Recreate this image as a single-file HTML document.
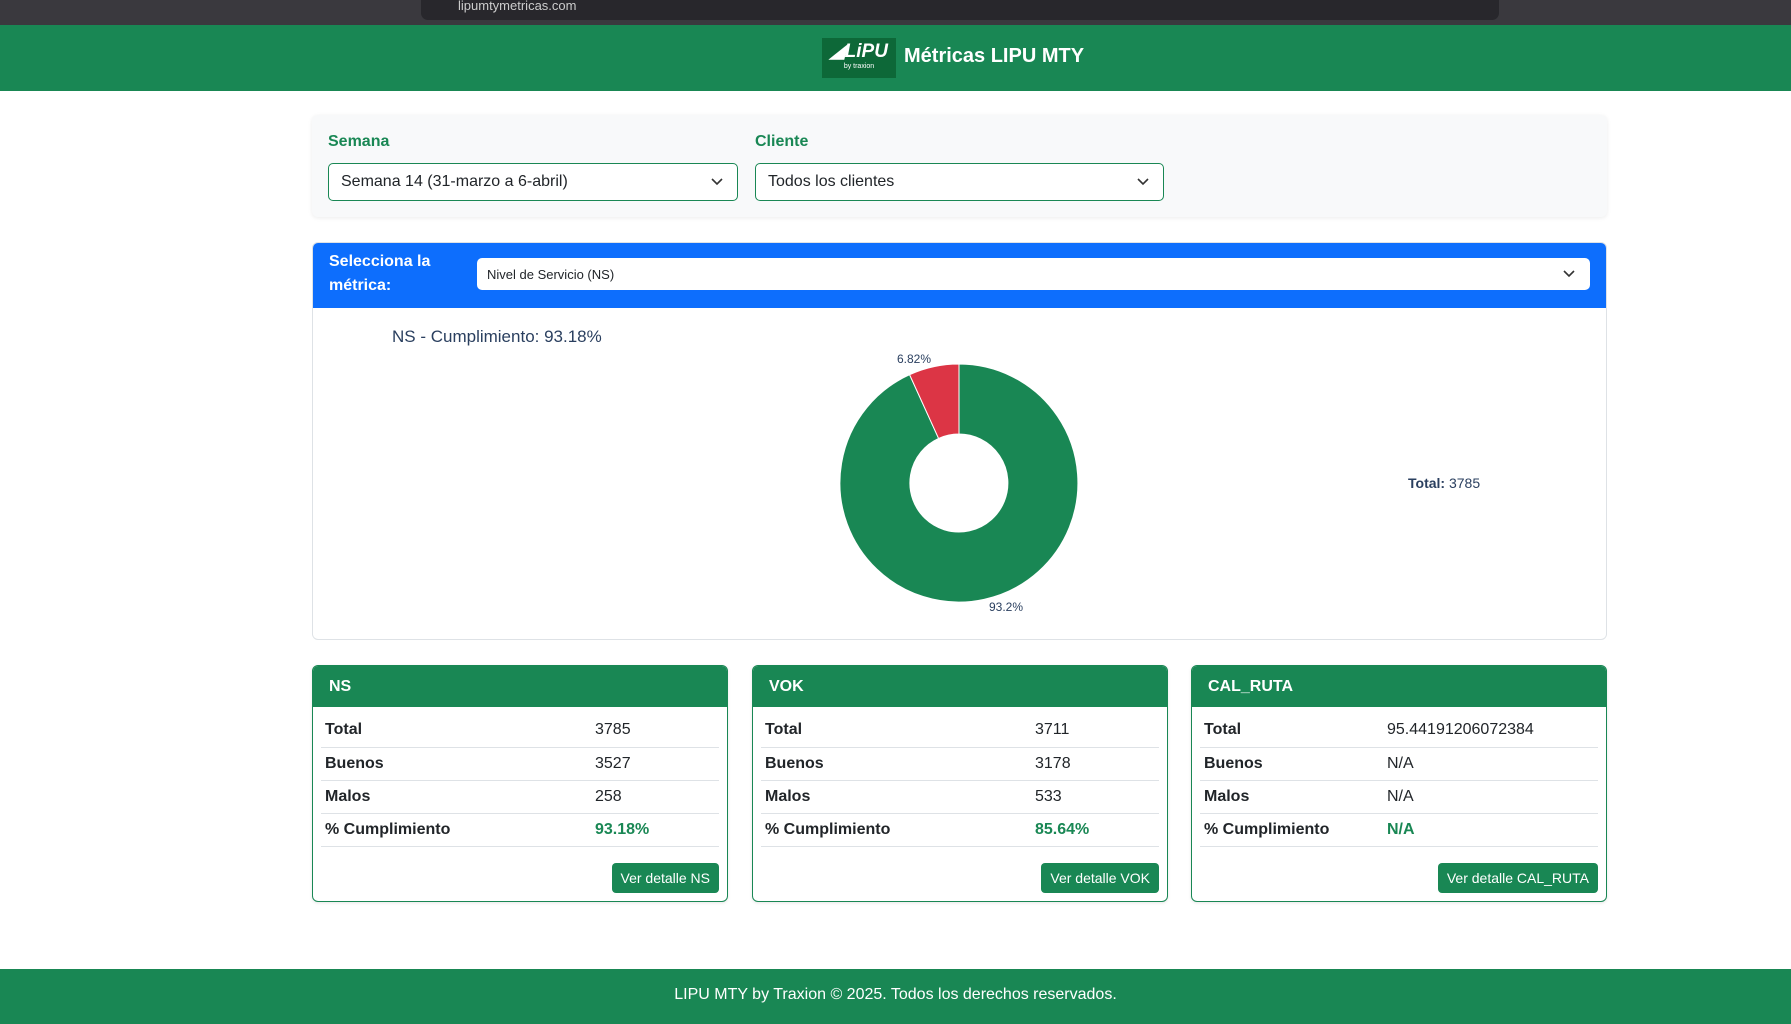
<!DOCTYPE html>
<html><head><meta charset="utf-8"><style>
*{box-sizing:border-box;margin:0;padding:0}
body{width:1791px;height:1024px;overflow:hidden;background:#fff;font-family:"Liberation Sans",sans-serif;color:#212529;position:relative}
.abs{position:absolute}
.sel{position:absolute;background:#fff;border:1px solid #198754;border-radius:5px;font-size:16px;padding-left:12px;display:flex;align-items:center}
.chev{position:absolute;right:14px;top:50%;margin-top:-5px}
.card{position:absolute;top:665px;width:416px;height:237px;border:1px solid #198754;border-radius:6px;overflow:hidden;box-shadow:0 1px 3px rgba(0,0,0,.1)}
.card .h{background:#198754;color:#fff;font-weight:bold;font-size:16px;height:41px;line-height:41px;padding-left:16px}
.card table{position:absolute;left:8px;top:48px;width:398px;border-collapse:collapse;font-size:16px;table-layout:fixed}
.card td{height:33px;border-bottom:1px solid #dee2e6;padding-left:4px}
.card td:first-child{font-weight:bold;width:270px}
.card.c3 td:first-child{width:183px}
.g{color:#198754;font-weight:bold}
.btn{position:absolute;right:8px;top:197px;height:30px;background:#198754;color:#fff;font-size:14px;line-height:30px;padding:0 9px;border-radius:4px}
</style></head><body>
<div class="abs" style="left:0;top:0;width:1791px;height:25px;background:#3a393e"></div>
<div class="abs" style="left:421px;top:0;width:1078px;height:20px;background:#28272c;border-radius:0 0 7px 7px"></div>
<div class="abs" style="left:458px;top:-2px;color:#ccc;font-size:13px">lipumtymetricas.com</div>
<div class="abs" style="left:0;top:25px;width:1791px;height:66px;background:#198754"></div>
<div class="abs" style="left:822px;top:38px;width:74px;height:40px;background:#0d6838;color:#fff;text-align:center"><div style="font-weight:bold;font-style:italic;font-size:19px;line-height:22px;margin-top:3px">◢LiPU</div><div style="font-size:7px">by traxion</div></div>
<div class="abs" style="left:904px;top:45px;color:#fff;font-weight:bold;font-size:20px">Métricas LIPU MTY</div>

<div class="abs" style="left:312px;top:115px;width:1295px;height:102px;background:#f8f9fa;border-radius:6px;box-shadow:0 1px 4px rgba(0,0,0,.08)"></div>
<div class="abs" style="left:328px;top:133px;color:#198754;font-weight:bold;font-size:16px">Semana</div>
<div class="abs" style="left:755px;top:133px;color:#198754;font-weight:bold;font-size:16px">Cliente</div>
<div class="sel" style="left:328px;top:163px;width:410px;height:38px">Semana 14 (31-marzo a 6-abril)<svg class="chev" width="12" height="9" viewBox="0 0 12 9"><path d="M1 2l5 5 5-5" stroke="#333" stroke-width="1.6" fill="none"/></svg></div>
<div class="sel" style="left:755px;top:163px;width:409px;height:38px">Todos los clientes<svg class="chev" width="12" height="9" viewBox="0 0 12 9"><path d="M1 2l5 5 5-5" stroke="#333" stroke-width="1.6" fill="none"/></svg></div>

<div class="abs" style="left:312px;top:242px;width:1295px;height:398px;border:1px solid #dee2e6;border-radius:6px;overflow:hidden">
<div style="height:65px;background:#0d6efd"></div></div>
<div class="abs" style="left:329px;top:250px;color:#fff;font-weight:bold;font-size:16px;line-height:24px">Selecciona la<br>métrica:</div>
<div class="sel" style="left:477px;top:258px;width:1113px;height:32px;border-color:#fff;font-size:13px;padding-left:9px">Nivel de Servicio (NS)<svg class="chev" width="12" height="9" viewBox="0 0 12 9"><path d="M1 2l5 5 5-5" stroke="#333" stroke-width="1.6" fill="none"/></svg></div>
<div class="abs" style="left:392px;top:327px;font-size:17px;color:#2a3f5f">NS - Cumplimiento: 93.18%</div>
<svg class="abs" style="left:0;top:0" width="1791" height="1024">
<path d="M959 364 A119 119 0 1 1 909.6 374.7 L938.6 438.4 A49 49 0 1 0 959 434 Z" fill="#198754" stroke="#fff" stroke-width="1"/>
<path d="M959 364 A119 119 0 0 0 909.6 374.7 L938.6 438.4 A49 49 0 0 1 959 434 Z" fill="#dc3545" stroke="#fff" stroke-width="1"/>
<text x="897" y="363" font-size="12" fill="#2a3f5f" font-family="Liberation Sans">6.82%</text>
<text x="989" y="611" font-size="12" fill="#2a3f5f" font-family="Liberation Sans">93.2%</text>
<text x="1408" y="488" font-size="14" fill="#2a3f5f" font-family="Liberation Sans"><tspan font-weight="bold">Total:</tspan> 3785</text>
</svg>

<div class="card" style="left:312px"><div class="h">NS</div><table><tr><td>Total</td><td>3785</td></tr><tr><td>Buenos</td><td>3527</td></tr><tr><td>Malos</td><td>258</td></tr><tr><td>% Cumplimiento</td><td class="g">93.18%</td></tr></table><div class="btn">Ver detalle NS</div></div>
<div class="card" style="left:752px"><div class="h">VOK</div><table><tr><td>Total</td><td>3711</td></tr><tr><td>Buenos</td><td>3178</td></tr><tr><td>Malos</td><td>533</td></tr><tr><td>% Cumplimiento</td><td class="g">85.64%</td></tr></table><div class="btn">Ver detalle VOK</div></div>
<div class="card c3" style="left:1191px"><div class="h">CAL_RUTA</div><table><tr><td>Total</td><td>95.44191206072384</td></tr><tr><td>Buenos</td><td>N/A</td></tr><tr><td>Malos</td><td>N/A</td></tr><tr><td>% Cumplimiento</td><td class="g">N/A</td></tr></table><div class="btn">Ver detalle CAL_RUTA</div></div>

<div class="abs" style="left:0;top:969px;width:1791px;height:55px;background:#198754;color:#fff;text-align:center;line-height:52px;font-size:16px">LIPU MTY by Traxion © 2025. Todos los derechos reservados.</div>
</body></html>
